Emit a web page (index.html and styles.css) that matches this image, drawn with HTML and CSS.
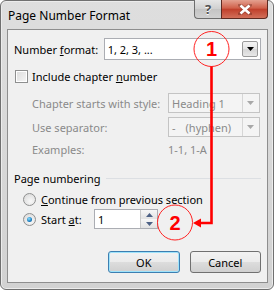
FILE: index.html
```html
<!DOCTYPE html>
<html lang="en">
<head>
  <meta charset="UTF-8" />
  <title>Page Number Format</title>
  <link rel="stylesheet" href="styles.css">
</head>
<body>
  <div class="screen">
    <div class="window">
      <div class="titlebar">
        <span class="title">Page Number Format</span>
        <div class="caption-buttons">
          <div class="cap-btn help">?</div>
          <div class="cap-btn close">
            <svg width="14" height="11" viewBox="0 0 14 11">
              <path d="M2 1 L12 10 M12 1 L2 10" stroke="#5a1e14" stroke-width="4" stroke-linecap="square" opacity="0.35"/>
              <path d="M2.5 1.5 L11.5 9.5 M11.5 1.5 L2.5 9.5" stroke="#fff" stroke-width="2.6"/>
            </svg>
          </div>
        </div>
      </div>

      <div class="client">
        <div class="row row-format">
          <span class="label label-format">Number <u>f</u>ormat:</span>
          <div class="combo combo-format">
            <span class="combo-text">1, 2, 3, ...</span>
            <span class="drop">
              <svg width="7" height="4" viewBox="0 0 7 4"><path d="M0 0 H7 L3.5 4 Z" fill="#000"/></svg>
            </span>
          </div>
        </div>

        <div class="row row-check">
          <span class="checkbox"></span>
          <span>Include chapter <u>n</u>umber</span>
        </div>

        <div class="row row-style disabled">
          <span class="label label-indent">Chapter starts with style:</span>
          <div class="combo combo-small">
            <span class="combo-text">Heading 1</span>
            <span class="drop">
              <svg width="7" height="4" viewBox="0 0 7 4"><path d="M0 0 H7 L3.5 4 Z" fill="#a8a8a8"/></svg>
            </span>
          </div>
        </div>

        <div class="row row-sep disabled">
          <span class="label label-indent">Use separator:</span>
          <div class="combo combo-small">
            <span class="combo-text">-<span class="sep-gap"></span>(hyphen)</span>
            <span class="drop">
              <svg width="7" height="4" viewBox="0 0 7 4"><path d="M0 0 H7 L3.5 4 Z" fill="#a8a8a8"/></svg>
            </span>
          </div>
        </div>

        <div class="row row-examples disabled">
          <span class="label label-indent">Examples:</span>
          <span class="examples">1-1, 1-A</span>
        </div>

        <div class="row row-group">
          <span>Page numbering</span>
          <span class="group-line"></span>
        </div>

        <div class="row row-continue">
          <span class="radio"></span>
          <span><u>C</u>ontinue from previous section</span>
        </div>

        <div class="row row-start">
          <span class="radio checked"></span>
          <span class="label-start">Start <u>a</u>t:</span>
          <div class="spin">
            <span class="spin-text">1</span>
            <div class="spin-btns">
              <span class="spin-btn">
                <svg width="7" height="4" viewBox="0 0 7 4"><path d="M0 4 H7 L3.5 0 Z" fill="#4d6185"/></svg>
              </span>
              <span class="spin-btn">
                <svg width="7" height="4" viewBox="0 0 7 4"><path d="M0 0 H7 L3.5 4 Z" fill="#4d6185"/></svg>
              </span>
            </div>
          </div>
        </div>

        <div class="row row-buttons">
          <button class="btn btn-default">OK</button>
          <button class="btn">Cancel</button>
        </div>
      </div>
    </div>

    <!-- callouts drawn over the dialog -->
    <svg class="callouts" width="276" height="291" viewBox="0 0 276 291">
      <path d="M211.5 66 V223 H199" fill="none" stroke="#f00" stroke-width="2.6"/>
      <path d="M193 223 L201 218.5 L201 227.5 Z" fill="#f00"/>
      <circle cx="211.5" cy="49" r="17.5" fill="none" stroke="#f22" stroke-width="1"/>
      <circle cx="175" cy="222.5" r="17.5" fill="none" stroke="#f22" stroke-width="1"/>
      <text x="211.5" y="56" class="callout-num">1</text>
      <text x="175" y="229.5" class="callout-num">2</text>
    </svg>
  </div>
</body>
</html>
```

FILE: styles.css
```css
body {
  margin: 0;
  background: #fff;
  font-family: "Noto Sans", "DejaVu Sans", sans-serif;
  font-size: 11px;
  color: #000;
  white-space: nowrap;
}
.screen {
  position: relative;
  width: 276px;
  height: 291px;
}
.window {
  width: 274px;
  height: 290px;
  box-sizing: border-box;
  border: 1px solid #707070;
  border-radius: 6px;
  background: linear-gradient(#dedede, #d2d2d2);
  box-shadow: inset 0 0 0 1px #ececec;
  padding: 0 5px 6px 6px;
  display: flex;
  flex-direction: column;
}
.titlebar {
  height: 28px;
  display: flex;
  justify-content: space-between;
  align-items: flex-start;
}
.title {
  margin-top: 6px;
  margin-left: 1px;
  font-size: 12px;
}
.caption-buttons {
  display: flex;
  margin-top: -1px;
}
.cap-btn {
  height: 19px;
  box-sizing: border-box;
  border: 1px solid #6d6d6d;
  border-top: none;
  display: flex;
  align-items: center;
  justify-content: center;
}
.help {
  width: 27px;
  border-radius: 0 0 0 4px;
  border-right: none;
  background: linear-gradient(#e6e6e6, #cfcfcf 50%, #c4c4c4 51%, #d0d0d0);
  color: #505050;
  font-weight: bold;
  font-size: 13px;
  text-shadow: 0 1px 0 #fff;
}
.close {
  width: 47px;
  border-color: #5e2a21;
  border-radius: 0 0 4px 0;
  background: linear-gradient(#e4a190, #d0604a 45%, #c0402c 52%, #d2705a);
}
.client {
  flex: 1;
  background: #f0f0f0;
  border: 1px solid #8e8e8e;
  padding: 0 6px;
  display: flex;
  flex-direction: column;
}
.row {
  display: flex;
  align-items: center;
  flex-shrink: 0;
}
.row-format {
  height: 22px;
  margin-top: 8px;
}
.label-format {
  width: 90px;
}
.combo {
  box-sizing: border-box;
  border: 1px solid #abadb3;
  display: flex;
  align-items: center;
  justify-content: space-between;
}
.combo-format {
  width: 158px;
  height: 22px;
  background: #fff;
  padding-left: 3px;
  padding-right: 2px;
}
.drop {
  width: 16px;
  height: 16px;
  box-sizing: border-box;
  border: 1px solid #9a9a9a;
  border-radius: 2px;
  background: linear-gradient(#f4f4f4, #e4e4e4 50%, #d6d6d6 51%, #e8e8e8);
  display: flex;
  align-items: center;
  justify-content: center;
}
.row-check {
  height: 14px;
  margin-top: 9px;
  padding-left: 1px;
}
.checkbox {
  width: 11px;
  height: 11px;
  border: 1px solid #8e8f8f;
  background: linear-gradient(135deg, #dcdcdc, #f6f6f6);
  box-shadow: inset 0 0 0 1px #fff;
  margin-right: 4px;
}
.disabled {
  color: #8a8a8a;
}
.label-indent {
  width: 136px;
  padding-left: 18px;
}
.row-style {
  height: 20px;
  margin-top: 10px;
}
.row-sep {
  height: 20px;
  margin-top: 4px;
}
.combo-small {
  width: 92px;
  height: 20px;
  border-color: #c4c4c4;
  background: #f4f4f4;
  padding-left: 3px;
  padding-right: 1px;
}
.combo-small .drop {
  height: 18px;
  border: none;
  border-left: 1px solid #d6d6d6;
  border-radius: 0;
  background: #f4f4f4;
}
.sep-gap {
  display: inline-block;
  width: 10px;
}
.row-examples {
  height: 16px;
  margin-top: 4px;
}
.row-group {
  height: 16px;
  margin-top: 13px;
}
.group-line {
  flex: 1;
  height: 1px;
  background: #dcdfe3;
  margin-left: 6px;
}
.row-continue {
  height: 16px;
  margin-top: 5px;
  padding-left: 9px;
}
.radio {
  width: 11px;
  height: 11px;
  border-radius: 50%;
  border: 1px solid #8e8f8f;
  background: radial-gradient(circle at 60% 65%, #f8f8f8, #d6d6d6);
  margin-right: 5px;
  display: flex;
  align-items: center;
  justify-content: center;
}
.radio.checked::after {
  content: "";
  width: 5px;
  height: 5px;
  border-radius: 50%;
  background: radial-gradient(circle at 40% 35%, #8fe0ff, #1a7ec0 60%, #0b4f88);
}
.row-start {
  height: 20px;
  margin-top: 2px;
  padding-left: 9px;
}
.label-start {
  width: 53px;
}
.spin {
  width: 64px;
  height: 20px;
  box-sizing: border-box;
  border: 1px solid #abadb3;
  background: #fff;
  display: flex;
  justify-content: space-between;
  align-items: center;
  padding-left: 3px;
}
.spin-btns {
  display: flex;
  flex-direction: column;
  height: 18px;
  border-left: 1px solid #c8c8c8;
}
.spin-btn {
  width: 16px;
  height: 9px;
  display: flex;
  align-items: center;
  justify-content: center;
  background: linear-gradient(#f7f7f7, #e2e2e2);
}
.row-buttons {
  height: 22px;
  margin-top: 22px;
  padding-left: 94px;
  gap: 10px;
}
.btn {
  width: 74px;
  height: 22px;
  box-sizing: border-box;
  border: 1px solid #707070;
  border-radius: 3px;
  background: linear-gradient(#f2f2f2, #ebebeb 50%, #dddddd 51%, #cfcfcf);
  font-family: inherit;
  font-size: 11px;
  color: #000;
  padding: 0;
}
.btn-default {
  border-color: #3c7fb1;
  box-shadow: inset 0 0 0 1px #9fe3fb;
}
.callouts {
  position: absolute;
  left: 0;
  top: 0;
}
.callout-num {
  font-family: "Liberation Sans", Arial, sans-serif;
  font-weight: bold;
  font-size: 20px;
  fill: #f00;
  text-anchor: middle;
}
```
